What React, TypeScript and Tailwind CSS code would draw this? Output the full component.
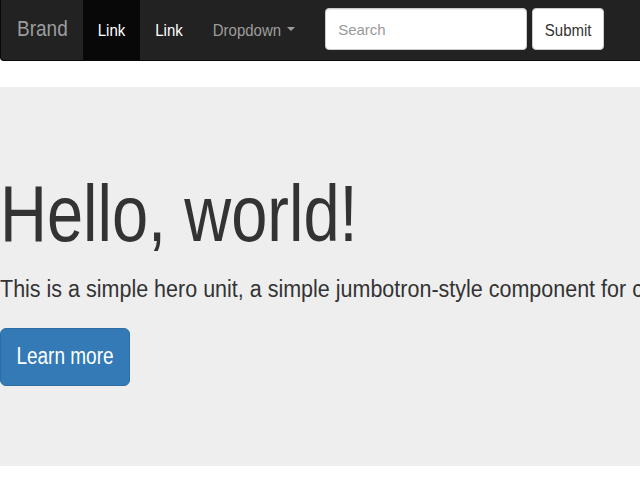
export default function App() {
  return (
    <div className="min-h-[480px] overflow-hidden bg-white font-['Liberation_Sans',Arial,sans-serif] text-[#333]">
      <nav className="flex h-[61px] items-stretch rounded-bl-[4px] border-b border-l border-[#080808] bg-[#222]">
        <a className="flex items-center pb-[3px] pl-4 pr-[15px] text-[19px] text-[#9d9d9d]">
          <span className="inline-block scale-y-[1.12] leading-none">Brand</span>
        </a>
        <a className="flex items-center bg-[#080808] px-[15px] pb-[2px] text-[15px] text-white">
          <span className="inline-block scale-y-[1.15] leading-none">Link</span>
        </a>
        <a className="flex items-center px-[15px] pb-[2px] text-[15px] text-white">
          <span className="inline-block scale-y-[1.15] leading-none">Link</span>
        </a>
        <a className="flex items-center px-[15px] pb-[2px] text-[15px] text-[#9d9d9d]">
          <span className="inline-block scale-y-[1.15] leading-none">Dropdown</span>
          <span className="ml-[6px] inline-block h-0 w-0 border-x-[4px] border-t-[4px] border-x-transparent border-t-[#9d9d9d]" />
        </a>
        <form className="ml-[15px] flex items-start gap-[5px] pt-[8px]" onSubmit={(e) => e.preventDefault()}>
          <input
            type="text"
            placeholder="Search"
            className="h-[42px] w-[202px] rounded-[4px] border border-[#ccc] bg-white px-[12px] text-[15px] text-[#555] shadow-[inset_0_1px_1px_rgba(0,0,0,0.075)] outline-none placeholder:text-[#999]"
          />
          <button
            type="submit"
            className="flex h-[42px] w-[72px] items-center justify-center rounded-[4px] border border-[#ccc] bg-white text-[15px] text-[#333]"
          >
            <span className="inline-block scale-y-[1.15] leading-none">Submit</span>
          </button>
        </form>
      </nav>

      <div className="mt-[26px] flex h-[379px] flex-col items-start bg-[#eee] pt-[102px]">
        <h1 className="inline-block h-[66px] origin-bottom scale-y-[1.23] whitespace-nowrap text-[65px] leading-none font-normal">
          Hello, world!
        </h1>
        <p className="mt-[26px] inline-block h-[21.5px] origin-bottom scale-y-[1.15] whitespace-nowrap text-[21.5px] leading-none">
          This is a simple hero unit, a simple jumbotron-style component for calling extra attention to featured content or information.
        </p>
        <button className="mt-[25px] flex h-[58px] w-[130px] items-center justify-center rounded-[6px] border border-[#2e6da4] bg-[#337ab7] text-[19px] text-white">
          <span className="inline-block scale-y-[1.22] leading-none">Learn more</span>
        </button>
      </div>
    </div>
  )
}
